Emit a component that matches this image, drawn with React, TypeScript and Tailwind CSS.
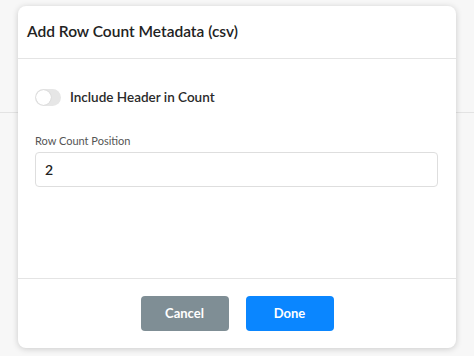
import { useState } from 'react';

const App = () => {
  const [includeHeader, setIncludeHeader] = useState(false);
  const [position, setPosition] = useState('2');

  return (
    <div
      className="relative h-[356px] w-[474px] overflow-hidden bg-[#f7f7f7]"
      style={{ fontFamily: 'Lato, "Open Sans", sans-serif' }}
    >
      {/* page behind the dialog */}
      <div className="h-[113px] border-b border-[#e3e3e3]" />

      <div className="absolute left-[18px] top-[6px] flex h-[342px] w-[438px] flex-col rounded-lg bg-white shadow-[0_1px_6px_rgba(0,0,0,0.18)]">
        <div className="flex h-[53px] items-center border-b border-[#e4e4e4] px-[9px]">
          <h2 className="text-[15.5px] font-semibold text-[#222]">Add Row Count Metadata (csv)</h2>
        </div>

        <div className="flex flex-1 flex-col px-[17px] pt-[28px]">
          <label className="flex cursor-pointer items-center gap-[9px]">
            <button
              type="button"
              onClick={() => setIncludeHeader(!includeHeader)}
              className={`relative h-[17px] w-[26px] rounded-full ${
                includeHeader ? 'bg-[#0a86ff]' : 'bg-[#e6e6e6]'
              }`}
            >
              <span
                className={`absolute top-[1px] h-[15px] w-[15px] rounded-full bg-white shadow-[0_0_1px_rgba(0,0,0,0.25)] ${
                  includeHeader ? 'left-[10px]' : 'left-[1px]'
                }`}
              />
            </button>
            <span className="text-[13.5px] font-semibold text-[#2a2a2a]">Include Header in Count</span>
          </label>

          <div className="mt-[26px] text-[11px] text-[#555]">Row Count Position</div>
          <input
            value={position}
            onChange={(e) => setPosition(e.target.value)}
            className="mt-[2px] h-[35px] w-[403px] rounded border border-[#dedede] px-[9px] text-[14px] font-semibold text-[#222] outline-none"
          />
        </div>

        <div className="flex h-[70px] items-center justify-center gap-[17px] border-t border-[#e4e4e4]">
          <button className="h-[35px] w-[88px] rounded bg-[#7f8e95] text-[13px] font-bold text-white">
            Cancel
          </button>
          <button className="h-[35px] w-[88px] rounded bg-[#0a86ff] text-[13px] font-bold text-white">
            Done
          </button>
        </div>
      </div>
    </div>
  );
};

export default App;
